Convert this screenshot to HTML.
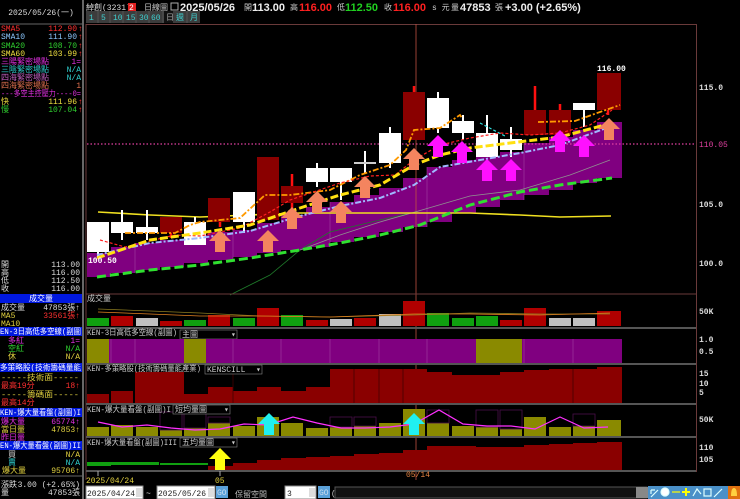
<!DOCTYPE html>
<html><head><meta charset="utf-8"><style>
html,body{margin:0;padding:0;background:#000;width:740px;height:499px;overflow:hidden}
svg{display:block}
text{font-family:"Liberation Mono","WenQuanYi Zen Hei","Noto Sans CJK TC",monospace;font-size:8px}
.b{font-family:"Liberation Sans","WenQuanYi Zen Hei",sans-serif;font-weight:bold;font-size:11px}
</style></head><body>
<svg width="740" height="499" viewBox="0 0 740 499" xmlns="http://www.w3.org/2000/svg">
<defs><path id="ar" d="M0,-11 L11,0 L5,0 L5,11 L-5,11 L-5,0 L-11,0Z"/></defs>
<rect width="740" height="499" fill="#000"/>
<!-- left panel -->
<line x1="83" y1="0" x2="83" y2="499" stroke="#888" stroke-width="1.5"/>
<line x1="0" y1="24" x2="83" y2="24" stroke="#666"/>
<text x="41" y="15" fill="#ddd" text-anchor="middle" font-size="9">2025/05/26(一)</text>
<g>
<text x="1" y="31" fill="#ff3030">SMA5</text><text x="77" y="31" fill="#ff3030" text-anchor="end">112.90</text><text x="78" y="31" fill="#f33">↑</text>
<text x="1" y="39" fill="#8cc8ff">SMA10</text><text x="77" y="39" fill="#8cc8ff" text-anchor="end">111.90</text><text x="78" y="39" fill="#f33">↑</text>
<text x="1" y="48" fill="#30d030">SMA20</text><text x="77" y="48" fill="#30d030" text-anchor="end">108.70</text><text x="78" y="48" fill="#f33">↑</text>
<text x="1" y="56" fill="#f0e040">SMA60</text><text x="77" y="56" fill="#f0e040" text-anchor="end">103.99</text><text x="78" y="56" fill="#f33">↑</text>
<text x="1" y="64" fill="#e030e0" font-size="7">三陽緊密場點</text><text x="81" y="64" fill="#e030e0" text-anchor="end">1=</text>
<text x="1" y="72" fill="#30d0d0" font-size="7">三陰緊密場點</text><text x="81" y="72" fill="#30d0d0" text-anchor="end">N/A</text>
<text x="1" y="80" fill="#c060c0" font-size="7">四海緊密場點</text><text x="81" y="80" fill="#30d0d0" text-anchor="end">N/A</text>
<text x="1" y="88" fill="#e07050" font-size="7">四海緊密場點</text><text x="81" y="88" fill="#e07050" text-anchor="end">1</text>
<text x="1" y="96" fill="#e030e0" textLength="80" lengthAdjust="spacingAndGlyphs">---多空主控壓力----0=</text>
<text x="1" y="104" fill="#f0e040">快</text><text x="77" y="104" fill="#f0e040" text-anchor="end">111.96</text><text x="78" y="104" fill="#f33">↑</text>
<text x="1" y="112" fill="#30d030">慢</text><text x="77" y="112" fill="#30d030" text-anchor="end">107.04</text><text x="78" y="112" fill="#f33">↑</text>

<text x="1" y="267" fill="#ddd">開</text><text x="80" y="267" fill="#ddd" text-anchor="end">113.00</text>
<text x="1" y="275" fill="#ddd">高</text><text x="80" y="275" fill="#ddd" text-anchor="end">116.00</text>
<text x="1" y="283" fill="#ddd">低</text><text x="80" y="283" fill="#ddd" text-anchor="end">112.50</text>
<text x="1" y="291" fill="#ddd">收</text><text x="80" y="291" fill="#ddd" text-anchor="end">116.00</text>
<rect x="0" y="294" width="82" height="9" fill="#0018e0"/><text x="41" y="301" fill="#fff" text-anchor="middle" font-size="7">成交量</text>
<text x="1" y="310" fill="#ddd" font-size="7">成交量</text><text x="80" y="310" fill="#ddd" text-anchor="end" font-size="7">47853張↑</text>
<text x="1" y="318" fill="#e0d040" font-size="7">MA5</text><text x="80" y="318" fill="#ff3030" text-anchor="end" font-size="7">33561張↑</text>
<text x="1" y="326" fill="#e0d040" font-size="7">MA10</text>
<rect x="0" y="327" width="82" height="9" fill="#0018e0"/><text x="0" y="334" fill="#fff" font-size="7" textLength="81" lengthAdjust="spacingAndGlyphs">EN-3日高低多空線(副圖</text>
<text x="8" y="343" fill="#e030e0" font-size="7">多紅</text><text x="80" y="343" fill="#e030e0" text-anchor="end">1=</text>
<text x="8" y="351" fill="#30d030" font-size="7">空紅</text><text x="80" y="351" fill="#30d030" text-anchor="end">N/A</text>
<text x="8" y="359" fill="#e0d040" font-size="7">休</text><text x="80" y="359" fill="#e0d040" text-anchor="end">N/A</text>
<rect x="0" y="363" width="82" height="9" fill="#0018e0"/><text x="0" y="370" fill="#fff" font-size="7" textLength="81" lengthAdjust="spacingAndGlyphs">多策略股(技術籌碼量能</text>
<text x="1" y="380" fill="#e0d040" font-size="7" textLength="78" lengthAdjust="spacingAndGlyphs">-----技術面-----</text>
<text x="1" y="388" fill="#ff3030" font-size="7">最高19分</text><text x="80" y="388" fill="#ff3030" text-anchor="end" font-size="7">18↑</text>
<text x="1" y="397" fill="#e0d040" font-size="7" textLength="78" lengthAdjust="spacingAndGlyphs">-----籌碼面-----</text>
<text x="1" y="405" fill="#ff3030" font-size="7">最高14分</text>
<rect x="0" y="408" width="82" height="9" fill="#0018e0"/><text x="0" y="415" fill="#fff" font-size="7" textLength="81" lengthAdjust="spacingAndGlyphs">KEN-爆大量看盤(副圖)I</text>
<text x="1" y="424" fill="#e030e0" font-size="7">爆大量</text><text x="80" y="424" fill="#e030e0" text-anchor="end" font-size="7">65774↑</text>
<text x="1" y="432" fill="#e0d040" font-size="7">當日量</text><text x="80" y="432" fill="#e0d040" text-anchor="end" font-size="7">47853↑</text>
<text x="1" y="440" fill="#e030e0" font-size="7">昨日量</text>
<rect x="0" y="441" width="82" height="9" fill="#0018e0"/><text x="0" y="448" fill="#fff" font-size="7" textLength="81" lengthAdjust="spacingAndGlyphs">EN-爆大量看盤(副圖)II</text>
<text x="8" y="457" fill="#ddd" font-size="7">買</text><text x="80" y="457" fill="#e0d040" text-anchor="end">N/A</text>
<text x="8" y="465" fill="#30d0d0" font-size="7">賣</text><text x="80" y="465" fill="#30d0d0" text-anchor="end">N/A</text>
<text x="2" y="473" fill="#e0d040" font-size="7">爆大量</text><text x="80" y="473" fill="#e0d040" text-anchor="end" font-size="7">95706↑</text>
<line x1="0" y1="476" x2="83" y2="476" stroke="#666"/>
<text x="1" y="487" fill="#ddd" font-size="7">漲跌</text><text x="80" y="487" fill="#ddd" text-anchor="end" font-size="7">3.00 (+2.65%)</text>
<text x="1" y="495" fill="#ddd" font-size="7">量</text><text x="80" y="495" fill="#ddd" text-anchor="end" font-size="7">47853張</text>
</g>
<!-- header -->
<text x="86" y="10" fill="#ddd" font-size="9">綽創(3231)</text>
<rect x="128" y="3" width="8" height="8" fill="#e02020"/><text x="129" y="10" fill="#fff" font-size="7">2</text>
<text x="144" y="10" fill="#ccc" font-size="8">日線圖</text>
<rect x="171" y="3" width="7" height="7" fill="none" stroke="#aaa"/>
<text x="180" y="11" class="b" fill="#eee">2025/05/26</text>
<text x="244" y="10" fill="#ccc">開</text><text x="252" y="11" class="b" fill="#eee">113.00</text>
<text x="290" y="10" fill="#ccc">高</text><text x="299" y="11" class="b" fill="#ff2020">116.00</text>
<text x="337" y="10" fill="#ccc">低</text><text x="345" y="11" class="b" fill="#20d020">112.50</text>
<text x="384" y="10" fill="#ccc">收</text><text x="393" y="11" class="b" fill="#ff2020">116.00</text>
<text x="432" y="10" fill="#ccc">s 元</text>
<text x="451" y="10" fill="#ccc">量</text><text x="460" y="11" class="b" fill="#eee">47853</text>
<text x="495" y="10" fill="#ccc">張</text><text x="505" y="11" class="b" fill="#eee">+3.00 (+2.65%)</text>
<!-- toolbar -->
<rect x="86" y="11" width="114" height="12" fill="#3c3c3c"/>
<g fill="#40d0d0" font-size="8">
<text x="89" y="20">1</text><text x="101" y="20">5</text><text x="113" y="20">10</text><text x="126" y="20">15</text><text x="139" y="20">30</text><text x="151" y="20">60</text>
</g>
<rect x="164" y="11" width="9" height="12" fill="#111"/><text x="166" y="20" fill="#aaa" font-size="6">日</text>
<text x="176" y="20" fill="#40d0d0">週</text><text x="190" y="20" fill="#40d0d0">月</text>
<g stroke="#555"><line x1="98" y1="11" x2="98" y2="23"/><line x1="110" y1="11" x2="110" y2="23"/><line x1="123" y1="11" x2="123" y2="23"/><line x1="136" y1="11" x2="136" y2="23"/><line x1="149" y1="11" x2="149" y2="23"/><line x1="163" y1="11" x2="163" y2="23"/><line x1="187" y1="11" x2="187" y2="23"/></g>
<!-- main frame -->
<line x1="86" y1="24.5" x2="696" y2="24.5" stroke="#6a3a3a"/>
<line x1="86" y1="24" x2="86" y2="480" stroke="#6a3a3a"/>
<line x1="696.5" y1="24" x2="696.5" y2="472" stroke="#6a3a3a"/>
<!-- purple band -->
<path fill="#800080" d="M87,253 H111 V247 H135 V243 H160 V240 H184 V235 H208 V232 H233 V230 H257 V223 H281 V215 H306 V207 H330 V202 H354 V195 H379 V188 H403 V178 H427 V167 H452 V160 H476 V157 H500 V152 H524 V143 H549 V137 H573 V130 H597 V122 H622 V178 H597 V183 H573 V190 H549 V195 H524 V200 H500 V207 H476 V213 H452 V222 H427 V227 H403 V232 H379 V237 H354 V242 H330 V247 H306 V250 H281 V253 H257 V257 H233 V260 H208 V263 H184 V267 H160 V270 H135 V273 H111 V277 H87Z"/>
<g stroke="#a040a0" stroke-width="0.6"><line x1="135" y1="243" x2="135" y2="273"/><line x1="233" y1="230" x2="233" y2="260"/><line x1="330" y1="202" x2="330" y2="247"/><line x1="427" y1="167" x2="427" y2="227"/><line x1="524" y1="143" x2="524" y2="200"/></g>
<line x1="87" y1="144" x2="696" y2="144" stroke="#e040a0" stroke-width="1.2" stroke-dasharray="1.5,2"/>
<line x1="416" y1="24" x2="416" y2="480" stroke="#c05040" stroke-width="0.8"/>
<polyline fill="none" stroke="#1e7a2a" stroke-width="0.8" points="230,295 270,275 300,250 330,232 380,220 415,212"/>
<polyline fill="none" stroke="#909090" stroke-width="0.8" points="300,250 340,235 380,222 415,212 470,196 520,190 570,175 610,160"/>
<polyline fill="none" stroke="#f0e020" stroke-width="1.6" points="98,212 150,215 200,217 250,215 300,213 400,213 470,213 520,215 560,217 611,216"/>
<!-- candles -->
<g>
<g stroke="#fff" stroke-width="2">
<line x1="98" y1="252" x2="98" y2="258"/><line x1="122" y1="210" x2="122" y2="240"/><line x1="147" y1="210" x2="147" y2="240"/><line x1="195" y1="217" x2="195" y2="245"/><line x1="244" y1="222" x2="244" y2="233"/><line x1="317" y1="163" x2="317" y2="187"/><line x1="341" y1="168" x2="341" y2="200"/><line x1="365" y1="151" x2="365" y2="173"/><line x1="390" y1="127" x2="390" y2="168"/><line x1="438" y1="92" x2="438" y2="133"/><line x1="463" y1="115" x2="463" y2="140"/><line x1="487" y1="115" x2="487" y2="157"/><line x1="511" y1="127" x2="511" y2="157"/><line x1="584" y1="103" x2="584" y2="127"/>
</g>
<g stroke="#ff1010" stroke-width="2.5">
<line x1="171" y1="217" x2="171" y2="238"/><line x1="220" y1="198" x2="220" y2="227"/><line x1="292" y1="174" x2="292" y2="208"/><line x1="414" y1="86" x2="414" y2="140"/><line x1="535" y1="86" x2="535" y2="135"/><line x1="560" y1="104" x2="560" y2="135"/><line x1="608" y1="73" x2="608" y2="115"/>
</g>
<g fill="#fff">
<rect x="87" y="222" width="22" height="30"/><rect x="111" y="222" width="22" height="11"/><rect x="136" y="227" width="22" height="6"/><rect x="184" y="222" width="22" height="23"/><rect x="233" y="192" width="22" height="30"/><rect x="306" y="168" width="22" height="14"/><rect x="330" y="168" width="22" height="14"/><rect x="354" y="162" width="22" height="2" fill="#ccc"/><rect x="379" y="133" width="22" height="30"/><rect x="427" y="98" width="22" height="30"/><rect x="452" y="121" width="22" height="12"/><rect x="476" y="133" width="22" height="24"/><rect x="500" y="139" width="22" height="11"/><rect x="573" y="103" width="22" height="7"/>
</g>
<g fill="#8a0000">
<rect x="160" y="217" width="22" height="16"/><rect x="208" y="198" width="22" height="24"/><rect x="257" y="157" width="22" height="63"/><rect x="281" y="186" width="22" height="17"/><rect x="403" y="92" width="22" height="48"/><rect x="524" y="110" width="22" height="25"/><rect x="549" y="110" width="22" height="25"/><rect x="597" y="73" width="24" height="37"/>
</g>
</g>
<polyline fill="none" stroke="#ff9a00" stroke-width="1.8" stroke-dasharray="6,2,2,2" points="125,233 175,233 190,225 200,222 240,218 265,195 290,195 330,190 360,175 390,165 406,150 414,130 440,128 460,115 462,118"/>
<polyline fill="none" stroke="#ff9a00" stroke-width="1.8" stroke-dasharray="6,2,2,2" points="538,122 575,121 600,112 620,105"/>
<polyline fill="none" stroke="#ff2020" stroke-width="1.2" stroke-dasharray="3,2" points="100,240 125,247 175,235 200,236 240,228 270,212 290,200 340,183 370,176 395,175 414,160 440,145 470,138 500,133 530,135 560,133 590,125 612,110"/>
<polyline fill="none" stroke="#30e0e0" stroke-width="1.2" stroke-dasharray="3,2" points="480,123 505,136"/>
<polyline fill="none" stroke="#a0b8ff" stroke-width="2" stroke-dasharray="6,2,2,2" points="97,255 150,243 200,238 250,231 300,216 340,206 380,198 414,185 440,167 480,160 520,153 560,145 612,126"/>
<polyline fill="none" stroke="#ffe010" stroke-width="3" stroke-dasharray="8,3" points="97,258 150,240 200,233 250,225 300,208 340,195 380,185 414,165 440,155 470,148 510,143 560,137 612,123"/>
<polyline fill="none" stroke="#30e030" stroke-width="3" stroke-dasharray="9,4" points="97,277 150,270 200,265 250,258 300,250 340,243 380,235 420,225 470,205 520,192 560,185 612,178"/>
<g fill="#f4845f">
<use href="#ar" x="220" y="241"/><use href="#ar" x="268" y="241"/><use href="#ar" x="292" y="218"/><use href="#ar" x="317" y="202"/><use href="#ar" x="341" y="212"/><use href="#ar" x="365" y="187"/><use href="#ar" x="414" y="159"/><use href="#ar" x="609" y="129"/>
</g>
<g fill="#ff10ff">
<use href="#ar" x="438" y="146"/><use href="#ar" x="462" y="152"/><use href="#ar" x="487" y="170"/><use href="#ar" x="511" y="170"/><use href="#ar" x="560" y="141"/><use href="#ar" x="584" y="146"/>
</g>
<text x="597" y="71" fill="#fff" font-size="8" font-weight="bold" font-family="Liberation Sans">116.00</text>
<text x="88" y="263" fill="#fff" font-size="8" font-weight="bold" font-family="Liberation Sans">100.50</text>
<g fill="#ddd" font-size="8" font-family="Liberation Sans" font-weight="bold">
<text x="699" y="90">115.0</text><text x="699" y="207">105.0</text><text x="699" y="266">100.0</text>
<text x="699" y="314">50K</text><text x="699" y="342">1.0</text><text x="699" y="354">0.5</text>
<text x="699" y="376">15</text><text x="699" y="386">10</text><text x="699" y="395">5</text>
<text x="699" y="422">50K</text><text x="699" y="450">110</text><text x="699" y="462">105</text>
</g>
<text x="699" y="147" fill="#e040a0" font-size="7">110.05</text>
<line x1="86" y1="294" x2="696" y2="294" stroke="#6a3a3a"/>
<g stroke="#555" stroke-width="2"><line x1="86" y1="328" x2="696" y2="328"/><line x1="86" y1="364" x2="696" y2="364"/><line x1="86" y1="404" x2="696" y2="404"/><line x1="86" y1="437" x2="696" y2="437"/><line x1="86" y1="471" x2="696" y2="471"/></g>
<text x="87" y="301" fill="#ccc" font-size="7">成交量</text>
<g>
<rect x="87" y="318" width="22" height="8" fill="#10a010"/><rect x="111" y="316" width="22" height="10" fill="#b00000"/><rect x="136" y="318" width="22" height="8" fill="#c0c0c0"/><rect x="160" y="321" width="22" height="5" fill="#b00000"/><rect x="184" y="320" width="22" height="6" fill="#10a010"/><rect x="208" y="315" width="22" height="11" fill="#b00000"/><rect x="233" y="318" width="22" height="8" fill="#10a010"/><rect x="257" y="308" width="22" height="18" fill="#b00000"/><rect x="281" y="315" width="22" height="11" fill="#10a010"/><rect x="306" y="320" width="22" height="6" fill="#b00000"/><rect x="330" y="319" width="22" height="7" fill="#c0c0c0"/><rect x="354" y="318" width="22" height="8" fill="#b00000"/><rect x="379" y="314" width="22" height="12" fill="#c0c0c0"/><rect x="403" y="301" width="22" height="25" fill="#b00000"/><rect x="427" y="313" width="22" height="13" fill="#10a010"/><rect x="452" y="318" width="22" height="8" fill="#10a010"/><rect x="476" y="316" width="22" height="10" fill="#10a010"/><rect x="500" y="320" width="22" height="6" fill="#b00000"/><rect x="524" y="308" width="22" height="18" fill="#b00000"/><rect x="549" y="318" width="22" height="8" fill="#c0c0c0"/><rect x="573" y="318" width="22" height="8" fill="#c0c0c0"/><rect x="597" y="311" width="24" height="15" fill="#b00000"/>
</g>
<polyline fill="none" stroke="#8a7a20" stroke-width="0.8" points="98,309 150,311 200,313 260,316 330,317 414,315 470,313 540,314 610,314"/>
<polyline fill="none" stroke="#e08020" stroke-width="0.8" points="98,312 150,314 200,316 260,316 330,317 414,314 470,314 540,315 610,313"/>
<text x="87" y="335" fill="#ccc" font-size="7" textLength="90" lengthAdjust="spacingAndGlyphs">KEN-3日高低多空線(副圖)</text>
<rect x="180" y="330" width="57" height="9" fill="#000" stroke="#888" stroke-width="0.6"/><text x="182" y="337" fill="#ccc" font-size="7">主圖</text><text x="231" y="337" fill="#ccc" font-size="5">▾</text>
<rect x="87" y="339" width="535" height="24" fill="#800080"/>
<g fill="#8a8a00"><rect x="87" y="339" width="22" height="24"/><rect x="184" y="339" width="22" height="24"/><rect x="476" y="339" width="46" height="24"/></g>
<g stroke="#a040a0" stroke-width="0.6"><line x1="111" y1="339" x2="111" y2="363"/><line x1="135" y1="339" x2="135" y2="363"/><line x1="233" y1="339" x2="233" y2="363"/><line x1="281" y1="339" x2="281" y2="363"/><line x1="330" y1="339" x2="330" y2="363"/><line x1="379" y1="339" x2="379" y2="363"/><line x1="427" y1="339" x2="427" y2="363"/><line x1="524" y1="339" x2="524" y2="363"/><line x1="573" y1="339" x2="573" y2="363"/></g>
<g fill="#8a0000">
<rect x="87" y="394" width="22" height="9"/><rect x="111" y="391" width="22" height="12"/><rect x="135" y="372" width="49" height="31"/><rect x="184" y="394" width="24" height="9"/><rect x="208" y="387" width="25" height="16"/><rect x="233" y="391" width="24" height="12"/><rect x="257" y="387" width="24" height="16"/><rect x="281" y="391" width="25" height="12"/><rect x="306" y="387" width="24" height="16"/><rect x="330" y="369" width="97" height="34"/><rect x="427" y="372" width="25" height="31"/><rect x="452" y="375" width="48" height="28"/><rect x="500" y="372" width="24" height="31"/><rect x="524" y="370" width="25" height="33"/><rect x="549" y="369" width="48" height="34"/><rect x="597" y="367" width="25" height="36"/>
</g>
<g stroke="#400" stroke-width="0.8"><line x1="233" y1="369" x2="233" y2="403"/><line x1="354" y1="369" x2="354" y2="403"/><line x1="379" y1="369" x2="379" y2="403"/><line x1="403" y1="369" x2="403" y2="403"/><line x1="573" y1="369" x2="573" y2="403"/></g>
<text x="87" y="371" fill="#ccc" font-size="7" textLength="114" lengthAdjust="spacingAndGlyphs">KEN-多策略股(技術籌碼量能產業)</text>
<rect x="205" y="365" width="57" height="9" fill="#000" stroke="#888" stroke-width="0.6"/><text x="207" y="372" fill="#ccc" font-size="7">KENSCILL</text><text x="256" y="372" fill="#ccc" font-size="5">▾</text>
<g fill="#8a8a00">
<rect x="87" y="427" width="22" height="9"/><rect x="111" y="425" width="22" height="11"/><rect x="136" y="427" width="22" height="9"/><rect x="160" y="430" width="22" height="6"/><rect x="184" y="428" width="22" height="8"/><rect x="208" y="423" width="22" height="13"/><rect x="233" y="426" width="22" height="10"/><rect x="257" y="417" width="22" height="19"/><rect x="281" y="423" width="22" height="13"/><rect x="306" y="428" width="22" height="8"/><rect x="330" y="427" width="22" height="9"/><rect x="354" y="426" width="22" height="10"/><rect x="379" y="423" width="22" height="13"/><rect x="403" y="409" width="22" height="27"/><rect x="427" y="423" width="22" height="13"/><rect x="452" y="426" width="22" height="10"/><rect x="476" y="427" width="22" height="9"/><rect x="500" y="429" width="22" height="7"/><rect x="524" y="417" width="22" height="19"/><rect x="549" y="427" width="22" height="9"/><rect x="573" y="426" width="22" height="10"/><rect x="597" y="420" width="24" height="16"/>
</g>
<g fill="none" stroke="#4a104a" stroke-width="0.8"><rect x="160" y="412" width="22" height="18"/><rect x="184" y="412" width="22" height="16"/><rect x="208" y="417" width="22" height="6"/><rect x="330" y="417" width="22" height="10"/><rect x="354" y="417" width="22" height="9"/><rect x="427" y="410" width="22" height="13"/><rect x="476" y="410" width="22" height="17"/><rect x="500" y="410" width="22" height="19"/><rect x="573" y="414" width="22" height="12"/></g>
<polyline fill="none" stroke="#ff30ff" stroke-width="1.2" points="98,422 122,427 147,425 171,428 195,430 220,429 244,424 268,425 293,417 317,423 341,428 365,428 390,427 414,424 439,410 463,424 487,426 511,426 535,429 560,417 584,428 608,427"/>
<text x="87" y="412" fill="#ccc" font-size="7" textLength="84" lengthAdjust="spacingAndGlyphs">KEN-爆大量看盤(副圖)I</text>
<rect x="173" y="405" width="57" height="9" fill="#000" stroke="#888" stroke-width="0.6"/><text x="175" y="412" fill="#ccc" font-size="7">短均量圖</text><text x="224" y="412" fill="#ccc" font-size="5">▾</text>
<g fill="#20f0f0"><use href="#ar" x="269" y="424"/><use href="#ar" x="414" y="424"/></g>
<g fill="#10a010"><rect x="87" y="462" width="24" height="4"/><rect x="111" y="462" width="24" height="3"/><rect x="135" y="462" width="24" height="3"/><rect x="160" y="463" width="24" height="2"/><rect x="184" y="463" width="24" height="2"/></g>
<g fill="#8a0000">
<rect x="208" y="466" width="25" height="4"/><rect x="233" y="463" width="24" height="7"/><rect x="257" y="460" width="24" height="10"/><rect x="281" y="458" width="25" height="12"/><rect x="306" y="457" width="24" height="13"/><rect x="330" y="456" width="24" height="14"/><rect x="354" y="454" width="25" height="16"/><rect x="379" y="453" width="24" height="17"/><rect x="403" y="450" width="24" height="20"/><rect x="427" y="446" width="25" height="24"/><rect x="452" y="446" width="24" height="24"/><rect x="476" y="447" width="24" height="23"/><rect x="500" y="447" width="24" height="23"/><rect x="524" y="445" width="25" height="25"/><rect x="549" y="444" width="24" height="26"/><rect x="573" y="443" width="24" height="27"/><rect x="597" y="442" width="25" height="28"/>
</g>
<text x="87" y="445" fill="#ccc" font-size="7" textLength="90" lengthAdjust="spacingAndGlyphs">KEN-爆大量看盤(副圖)III</text>
<rect x="180" y="438" width="57" height="9" fill="#000" stroke="#888" stroke-width="0.6"/><text x="182" y="445" fill="#ccc" font-size="7">五均量圖</text><text x="231" y="445" fill="#ccc" font-size="5">▾</text>
<use href="#ar" x="220" y="459" fill="#ffff10"/>
<line x1="98" y1="471" x2="98" y2="476" stroke="#aaa"/><line x1="220" y1="471" x2="220" y2="476" stroke="#aaa"/>
<text x="86" y="483" fill="#e0d040" font-size="8">2025/04/24</text>
<text x="215" y="483" fill="#e0d040" font-size="8">05</text>
<text x="406" y="477" fill="#e08040" font-size="6">05/14</text>
<rect x="86" y="486" width="57" height="13" fill="#fff" stroke="#888"/><text x="87" y="496" fill="#222" font-size="9" font-family="Liberation Serif">2025/04/24</text><rect x="136" y="488" width="6" height="9" fill="#ddd"/>
<text x="146" y="496" fill="#ddd" font-size="9">~</text>
<rect x="157" y="486" width="58" height="13" fill="#fff" stroke="#888"/><text x="158" y="496" fill="#222" font-size="9" font-family="Liberation Serif">2025/05/26</text><rect x="208" y="488" width="6" height="9" fill="#ddd"/>
<rect x="216" y="486" width="12" height="12" fill="#5aa0d8"/><text x="217" y="495" fill="#cde" font-size="6">GO</text>
<text x="235" y="497" fill="#bbb" font-size="12" font-family="Noto Serif CJK SC, serif">保留空間</text>
<rect x="285" y="486" width="31" height="13" fill="#fff" stroke="#888"/><text x="287" y="496" fill="#222" font-size="9" font-family="Liberation Serif">3</text><rect x="309" y="488" width="6" height="9" fill="#ddd"/>
<rect x="318" y="486" width="12" height="12" fill="#5aa0d8"/><text x="319" y="495" fill="#cde" font-size="6">GO</text>
<text x="331" y="496" fill="#ccc" font-size="9">(</text>
<rect x="335" y="487" width="312" height="11" fill="#111" stroke="#555"/>
<rect x="636" y="487" width="12" height="11" fill="#888"/>
<rect x="648" y="486" width="80" height="13" fill="#4a90c8"/>
<g stroke="#dff" stroke-width="1.2" fill="none"><path d="M651,497 L658,490 M651,490 H655 M651,490 V494"/><circle cx="665" cy="492" r="4" fill="#fff"/><line x1="672" y1="492" x2="680" y2="492" stroke="#ff0"/><path d="M682,492 H690 M686,488 V496" stroke="#ff0" stroke-width="2"/><path d="M693,496 L697,489 L701,494"/><rect x="704" y="489" width="7" height="7"/><line x1="714" y1="497" x2="722" y2="489"/></g>
<rect x="728" y="486" width="12" height="13" fill="#e07010"/><path d="M731,496 Q731,488 734,488 Q737,488 737,496Z" fill="#ffd040"/>
</svg>
</body></html>
